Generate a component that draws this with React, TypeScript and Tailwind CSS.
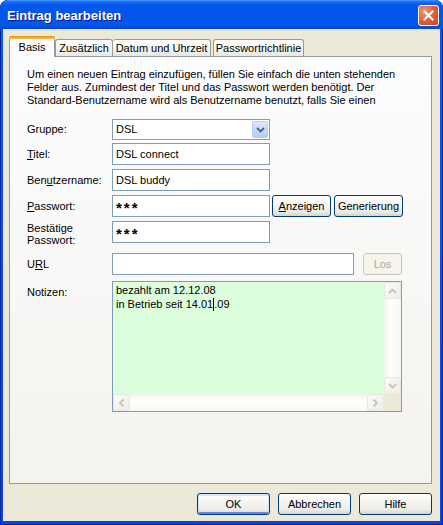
import React from "react";

function Chev({ dir, color = "#C6C5BA" }: { dir: "up" | "down" | "left" | "right"; color?: string }) {
  const rot = { up: 0, down: 180, left: 270, right: 90 }[dir];
  return (
    <svg width="9" height="6" viewBox="0 0 9 6" style={{ transform: `rotate(${rot}deg)` }}>
      <polyline points="1,5 4.5,1.5 8,5" fill="none" stroke={color} strokeWidth="1.8" />
    </svg>
  );
}

function ScrollBtn({ dir }: { dir: "up" | "down" | "left" | "right" }) {
  return (
    <div className="w-[17px] h-[17px] shrink-0 rounded-[2px] border border-[#E9E8E0] bg-[linear-gradient(135deg,#FBFBF8,#EEEDE6)] flex items-center justify-center">
      <Chev dir={dir} />
    </div>
  );
}

function XPButton({
  children,
  className = "",
  disabled = false,
  def = false,
}: {
  children: React.ReactNode;
  className?: string;
  disabled?: boolean;
  def?: boolean;
}) {
  const base = disabled
    ? "border-[#C9C7BA] text-[#ACA899] bg-[#F5F4EA]"
    : "border-[#003C74] text-black bg-[linear-gradient(180deg,#FFFFFF_0%,#F5F4F0_40%,#ECEBE6_80%,#D8D2C6_100%)]";
  const focus = def ? "shadow-[inset_0_1px_0_1px_#CEE7FF,inset_0_-1px_0_1px_#6982EE]" : "";
  return (
    <div
      className={`h-[22px] shrink-0 rounded-[3px] border flex items-center justify-center text-[11px] ${base} ${focus} ${className}`}
    >
      {children}
    </div>
  );
}

function TextBox({ children, className = "" }: { children?: React.ReactNode; className?: string }) {
  return (
    <div className={`h-[22px] shrink-0 border border-[#7F9DB9] bg-white flex items-center pl-[3px] text-[11px] ${className}`}>
      {children}
    </div>
  );
}

export default function App() {
  return (
    <div className="w-[443px] h-[525px] font-['Liberation_Sans',Arial,sans-serif] text-[11px] text-black">
      <div className="w-full h-full flex flex-col rounded-t-[8px] overflow-hidden bg-[linear-gradient(180deg,#0A5CEC,#0846D8)] shadow-[inset_0_0_0_1px_#0024A8]">
        {/* Title bar */}
        <div className="h-[29px] shrink-0 flex items-center justify-between pl-[7px] pr-[4px] bg-[linear-gradient(180deg,#4B9BFF_0%,#1C6FF5_6%,#0058EE_18%,#0355E8_55%,#0058EE_85%,#0148D5_100%)] rounded-t-[8px]">
          <span className="text-white font-bold text-[13px] leading-none pt-[2px] [text-shadow:1px_1px_0_#0A1883]">
            Eintrag bearbeiten
          </span>
          <div className="mt-[1px] w-[21px] h-[21px] rounded-[3px] border border-white bg-[radial-gradient(circle_at_30%_30%,#F19A7D_0%,#E4623C_45%,#C9421C_100%)] flex items-center justify-center">
            <svg width="11" height="11" viewBox="0 0 11 11">
              <path d="M1.5 1.5 L9.5 9.5 M9.5 1.5 L1.5 9.5" stroke="white" strokeWidth="2" strokeLinecap="square" />
            </svg>
          </div>
        </div>

        {/* Body */}
        <div className="flex-1 mx-[3px] mb-[4px] bg-[#ECE9D8] flex flex-col pt-[7px] pl-[6px] pr-[8px]">
          {/* Tabs */}
          <div className="h-[20px] flex items-end">
            <div className="relative z-10 -mb-px w-[46px] h-[21px] bg-[#FCFCFE] border-x border-[#919B9C] rounded-t-[3px] flex flex-col">
              <div className="h-[3px] -mx-px rounded-t-[3px] bg-[linear-gradient(180deg,#E68B2C,#FFC73C)]" />
              <div className="flex-1 flex items-center justify-center pb-[2px]">Basis</div>
            </div>
            <div className="w-[58px] h-[17px] border border-b-0 border-[#919B9C] rounded-t-[3px] bg-[linear-gradient(180deg,#FFFFFF,#F3F3EF_60%,#E8E7E0)] flex items-center justify-center pt-px">
              Zusätzlich
            </div>
            <div className="w-[98px] h-[17px] border border-b-0 border-l-0 border-[#919B9C] rounded-t-[3px] bg-[linear-gradient(180deg,#FFFFFF,#F3F3EF_60%,#E8E7E0)] flex items-center justify-center pt-px">
              Datum und Uhrzeit
            </div>
            <div className="ml-[2px] w-[91px] h-[17px] border border-b-0 border-[#919B9C] rounded-t-[3px] bg-[linear-gradient(180deg,#FFFFFF,#F3F3EF_60%,#E8E7E0)] flex items-center justify-center pt-px">
              Passwortrichtlinie
            </div>
          </div>

          {/* Panel */}
          <div className="h-[428px] shrink-0 border border-[#919B9C] bg-[linear-gradient(180deg,#FCFCFE,#F4F3EE)] pt-[11px] pl-[17px] flex flex-col">
            <div className="leading-[13px] whitespace-nowrap">
              <div>Um einen neuen Eintrag einzufügen, füllen Sie einfach die unten stehenden</div>
              <div>Felder aus. Zumindest der Titel und das Passwort werden benötigt. Der</div>
              <div>Standard-Benutzername wird als Benutzername benutzt, falls Sie einen</div>
            </div>

            {/* Gruppe */}
            <div className="mt-[12px] flex items-center">
              <div className="w-[85px]">Gruppe:</div>
              <div className="w-[158px] h-[21px] border border-[#7F9DB9] bg-white flex items-center pl-[3px] pr-px">
                <span className="flex-1">DSL</span>
                <div className="w-[16px] h-[17px] rounded-[2px] border border-[#BACCF6] bg-[linear-gradient(180deg,#DCE6FE,#B7CBFA)] flex items-center justify-center">
                  <Chev dir="down" color="#4D6185" />
                </div>
              </div>
            </div>

            {/* Titel */}
            <div className="mt-[3px] flex items-center">
              <div className="w-[85px]">
                <u>T</u>itel:
              </div>
              <TextBox className="w-[158px]">DSL connect</TextBox>
            </div>

            {/* Benutzername */}
            <div className="mt-[4px] flex items-center">
              <div className="w-[85px]">
                Ben<u>u</u>tzername:
              </div>
              <TextBox className="w-[158px]">DSL buddy</TextBox>
            </div>

            {/* Passwort */}
            <div className="mt-[4px] flex items-center">
              <div className="w-[85px]">
                <u>P</u>asswort:
              </div>
              <TextBox className="w-[158px]">
                <span className="font-bold text-[15px] tracking-[2px] pt-[4px]">***</span>
              </TextBox>
              <XPButton className="ml-[2px] w-[59px]">
                <span>
                  <u>A</u>nzeigen
                </span>
              </XPButton>
              <XPButton className="ml-[3px] w-[69px]">Generierung</XPButton>
            </div>

            {/* Bestätige */}
            <div className="mt-[4px] flex items-start">
              <div className="w-[85px] leading-[12px] pt-px">
                Bestätige
                <br />
                Passwort:
              </div>
              <TextBox className="w-[158px]">
                <span className="font-bold text-[15px] tracking-[2px] pt-[4px]">***</span>
              </TextBox>
            </div>

            {/* URL */}
            <div className="mt-[7px] flex items-center">
              <div className="w-[85px]">
                U<u>R</u>L
              </div>
              <TextBox className="w-[242px]" />
              <XPButton disabled className="ml-[9px] w-[39px] h-[21px]">
                Los
              </XPButton>
            </div>

            {/* Notizen */}
            <div className="mt-[6px] flex items-start">
              <div className="w-[85px] pt-[3px]">Notizen:</div>
              <div className="w-[290px] h-[131px] border border-[#7F9DB9] flex flex-col">
                <div className="flex-1 flex min-h-0">
                  <div className="flex-1 bg-[#DCFEDC] pl-[3px] pt-[1px] leading-[14px]">
                    <div>bezahlt am 12.12.08</div>
                    <div className="flex items-center">
                      in Betrieb seit 14.01
                      <span className="inline-block w-px h-[13px] bg-black" />
                      .09
                    </div>
                  </div>
                  <div className="w-[17px] flex flex-col bg-[linear-gradient(90deg,#F4F3EE,#FEFEFB_40%,#F9F8F3)]">
                    <ScrollBtn dir="up" />
                    <div className="flex-1" />
                    <ScrollBtn dir="down" />
                  </div>
                </div>
                <div className="h-[17px] flex">
                  <div className="flex-1 flex bg-[linear-gradient(180deg,#F4F3EE,#FEFEFB_40%,#F9F8F3)]">
                    <ScrollBtn dir="left" />
                    <div className="flex-1" />
                    <ScrollBtn dir="right" />
                  </div>
                  <div className="w-[17px] bg-[#ECE9D8]" />
                </div>
              </div>
            </div>
          </div>

          {/* Bottom buttons */}
          <div className="mt-[9px] flex justify-end gap-[8px]">
            <XPButton def className="w-[73px]">
              OK
            </XPButton>
            <XPButton className="w-[73px]">Abbrechen</XPButton>
            <XPButton className="w-[73px]">Hilfe</XPButton>
          </div>
        </div>
      </div>
    </div>
  );
}
